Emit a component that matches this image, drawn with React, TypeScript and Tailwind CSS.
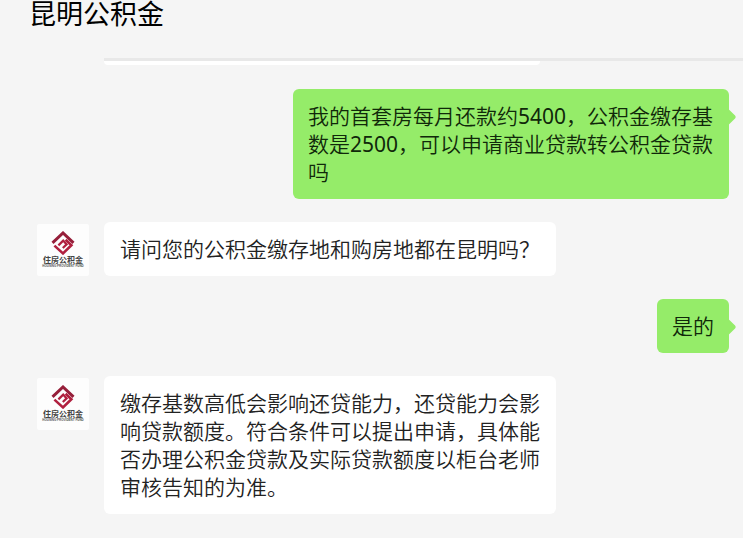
import React from "react";

type Message = {
  id: number;
  mine: boolean;
  text: string;
};

const messages: Message[] = [
  { id: 1, mine: true, text: "我的首套房每月还款约5400，公积金缴存基数是2500，可以申请商业贷款转公积金贷款吗" },
  { id: 2, mine: false, text: "请问您的公积金缴存地和购房地都在昆明吗？" },
  { id: 3, mine: true, text: "是的" },
  {
    id: 4,
    mine: false,
    text: "缴存基数高低会影响还贷能力，还贷能力会影响贷款额度。符合条件可以提出申请，具体能否办理公积金贷款及实际贷款额度以柜台老师审核告知的为准。",
  },
];

const Avatar = () => {
  return (
    <div className="mt-[2px] flex h-[52px] w-[52px] shrink-0 flex-col items-center rounded-[2px] bg-[#fdfdfd] pt-[7px]">
      <svg className="h-[24px] w-[24px] shrink-0" viewBox="0 0 24 24" fill="none">
        <path d="M1.5 11.8 12 2l10.5 9.8" stroke="#961f3a" strokeWidth="3" />
        <path d="M3.4 14.6 12 22.4l8.4-8.2-5.8-5.4" stroke="#b0203f" strokeWidth="2.6" />
        <path d="M7.4 14.4 12.2 9.6l3.4 3.8-3.8 3.6" stroke="#b0203f" strokeWidth="2.2" />
      </svg>
      <span className="font-['Noto_Sans_CJK_SC',sans-serif] text-[8px] leading-[9px] font-bold whitespace-nowrap text-[#444]">
        住房公积金
      </span>
      <span className="font-['Liberation_Sans',sans-serif] text-[3px] leading-[4px] font-bold whitespace-nowrap text-[#555]">
        HOUSING PROVIDENT FUND
      </span>
    </div>
  );
};

const Bubble = ({ mine, text }: Message) => {
  if (mine) {
    return (
      <div className="flex justify-end">
        <div className="relative max-w-[436px] rounded-[6px] bg-[#95ec69] px-[15px] py-[13px] text-[#10280a]">
          <span className="absolute top-[22px] -right-[5px] h-[12px] w-[12px] rotate-45 rounded-[2px] bg-[#95ec69]" />
          <p className="relative">{text}</p>
        </div>
      </div>
    );
  }
  return (
    <div className="flex items-start gap-[15px]">
      <Avatar />
      <div className="max-w-[452px] rounded-[6px] bg-white px-[16px] py-[13px] text-[#222]">
        <p>{text}</p>
      </div>
    </div>
  );
};

const App = () => {
  return (
    <div className="min-h-screen bg-[#f5f5f5] font-['Noto_Sans','Noto_Sans_CJK_SC_DemiLight','Noto_Sans_CJK_SC',sans-serif]">
      <header className="h-[58px] pl-[29px]">
        <h1 className="font-['Liberation_Sans','Noto_Sans_CJK_SC',sans-serif] text-[27px] leading-[30px] font-normal text-black">
          昆明公积金
        </h1>
      </header>
      <div className="ml-[104px] h-[3px] bg-[#e8e8e8]" />
      <div className="ml-[104px] h-[4px] w-[436px] rounded-b-[6px] bg-white" />
      <main className="flex flex-col gap-[23px] pt-[24px] pr-[14px] pb-6 pl-[37px] text-[21px] leading-[28px]">
        {messages.map((message) => (
          <Bubble key={message.id} {...message} />
        ))}
      </main>
    </div>
  );
};

export default App;
